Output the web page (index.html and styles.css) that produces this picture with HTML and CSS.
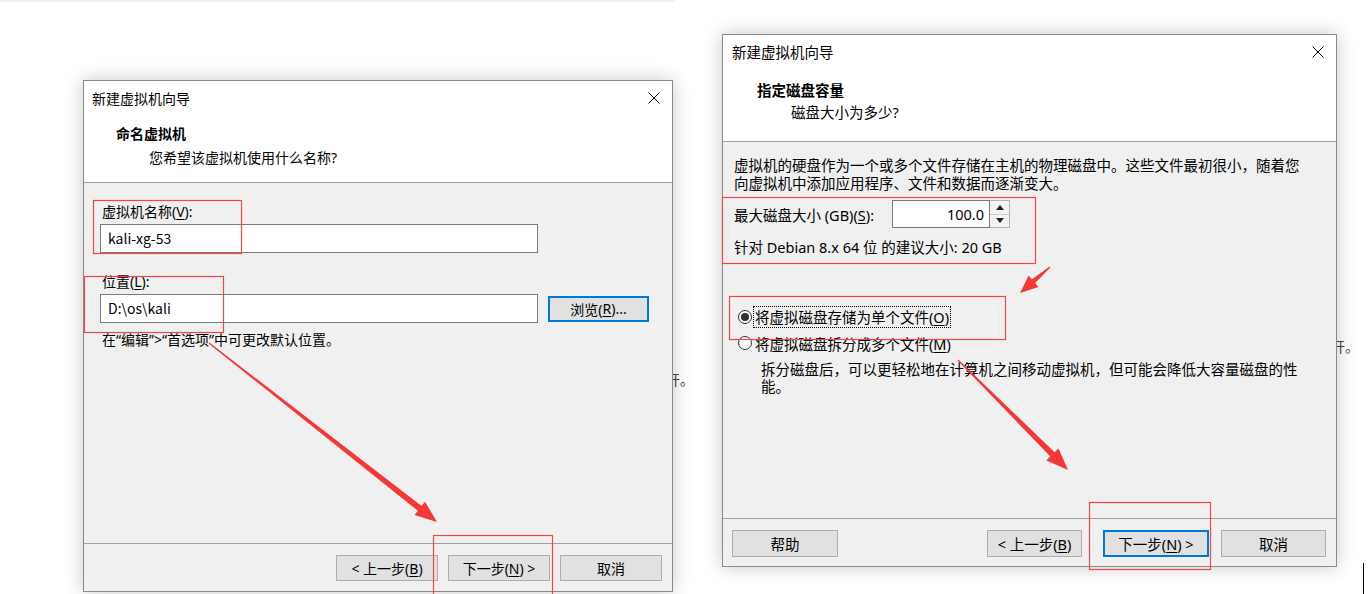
FILE: index.html
```html
<!DOCTYPE html>
<html>
<head>
	<meta charset="utf-8">
	<title>新建虚拟机向导</title>
	<link rel="stylesheet" href="styles.css">
</head>
<body>
	<div class="page">
		<div class="topline"></div>
		<span class="stray stray-a">开。</span>
		<span class="stray stray-b">开。</span>

		<!-- 第一步：命名虚拟机 -->
		<div class="wiz wiz-a">
			<div class="titlebar">
				<span>新建虚拟机向导</span>
				<svg class="close" viewBox="0 0 12 12"><path d="M0.5 0.5L11.5 11.5M11.5 0.5L0.5 11.5" stroke="#000" stroke-width="1"/></svg>
			</div>
			<div class="head">
				<div class="head-title">命名虚拟机</div>
				<div class="head-sub">您希望该虚拟机使用什么名称?</div>
			</div>
			<div class="body">
				<div class="label">虚拟机名称(<u>V</u>):</div>
				<div class="textbox">kali-xg-53</div>
				<div class="label label-loc">位置(<u>L</u>):</div>
				<div class="row">
					<div class="textbox">D:\os\kali</div>
					<div class="btn btn-focus browse">浏览(<u>R</u>)...</div>
				</div>
				<div class="hint">在“编辑”>“首选项”中可更改默认位置。</div>
			</div>
			<div class="foot">
				<div class="btn">&lt; 上一步(<u>B</u>)</div>
				<div class="btn">下一步(<u>N</u>) &gt;</div>
				<div class="btn">取消</div>
			</div>
		</div>

		<!-- 指定磁盘容量 -->
		<div class="wiz wiz-b">
			<div class="titlebar">
				<span>新建虚拟机向导</span>
				<svg class="close" viewBox="0 0 12 12"><path d="M0.5 0.5L11.5 11.5M11.5 0.5L0.5 11.5" stroke="#000" stroke-width="1"/></svg>
			</div>
			<div class="head">
				<div class="head-title">指定磁盘容量</div>
				<div class="head-sub">磁盘大小为多少?</div>
			</div>
			<div class="body">
				<div class="para">虚拟机的硬盘作为一个或多个文件存储在主机的物理磁盘中。这些文件最初很小，随着您向虚拟机中添加应用程序、文件和数据而逐渐变大。</div>
				<div class="size-row">
					<span class="size-label">最大磁盘大小 (GB)(<u>S</u>):</span>
					<div class="spin">
						<div class="spin-val">100.0</div>
						<div class="spin-btns">
							<div class="spin-up"></div>
							<div class="spin-down"></div>
						</div>
					</div>
				</div>
				<div class="rec">针对 Debian 8.x 64 位 的建议大小: 20 GB</div>
				<div class="radio-row radio-first">
					<span class="radio on"></span>
					<span class="focus">将虚拟磁盘存储为单个文件(<u>O</u>)</span>
				</div>
				<div class="radio-row">
					<span class="radio"></span>
					<span class="opt">将虚拟磁盘拆分成多个文件(<u>M</u>)</span>
				</div>
				<div class="desc">拆分磁盘后，可以更轻松地在计算机之间移动虚拟机，但可能会降低大容量磁盘的性能。</div>
			</div>
			<div class="foot">
				<div class="btn btn-help">帮助</div>
				<div class="btn btn-back">&lt; 上一步(<u>B</u>)</div>
				<div class="btn btn-focus btn-next">下一步(<u>N</u>) &gt;</div>
				<div class="btn btn-cancel">取消</div>
			</div>
		</div>

		<!-- 红框和箭头 -->
		<svg class="marks" width="1368" height="594" viewBox="0 0 1368 594">
			<g fill="none" stroke="#f04848" stroke-width="1.2">
				<rect x="93.5" y="200.5" width="148" height="53"/>
				<rect x="84.5" y="276.5" width="139" height="56"/>
				<rect x="433.5" y="535.5" width="119" height="70"/>
				<rect x="722.5" y="197.5" width="313" height="66"/>
				<rect x="729.5" y="296.5" width="276" height="43"/>
				<rect x="1089.5" y="502.5" width="121" height="67"/>
			</g>
			<g fill="#f43838">
				<polygon points="208.6,343.5 417.9,510.8 414.5,515.1 437,522 425,501.7 421.6,506 209.4,342.5"/>
				<polygon points="1049.7,266.6 1032,279.3 1028.7,275.5 1020,293 1038.5,286.9 1035.2,283.1 1050.3,267.4"/>
				<polygon points="957.6,360.4 1050.3,456.6 1046.4,460.5 1068,470 1058.5,448.4 1054.6,452.3 958.4,359.6"/>
			</g>
		</svg>
		<div class="cursor"></div>
	</div>
</body>
</html>
```

FILE: styles.css
```css
*{margin: 0;padding: 0;box-sizing: border-box;}
body {
	background: #fff;
	font-family: "Noto Sans", "Noto Sans CJK SC", sans-serif;
	color: #000;
}
u {
	text-decoration: underline;
	text-underline-offset: 2px;
}
.page {
	position: relative;
	width: 1368px;
	height: 594px;
	overflow: hidden;
}
.topline {
	position: absolute;
	left: 0;
	top: 0;
	width: 675px;
	height: 2px;
	background: #efefef;
}
.stray {
	position: absolute;
	font-size: 14px;
	line-height: 20px;
	color: #444;
}
.stray-a {
	left: 666px;
	top: 370px;
}
.stray-b {
	left: 1331px;
	top: 337px;
}
.cursor {
	position: absolute;
	left: 1363px;
	top: 563px;
	width: 1px;
	height: 31px;
	background: #000;
}

/* 对话框 */
.wiz {
	position: absolute;
	display: flex;
	flex-direction: column;
	background: #f0f0f0;
	border: 1px solid #8a8a8a;
	box-shadow: 0 0 18px rgba(0,0,0,0.22);
}
.wiz-a {
	left: 83px;
	top: 80px;
	width: 590px;
	height: 512px;
	font-size: 14px;
}
.wiz-b {
	left: 722px;
	top: 34px;
	width: 615px;
	height: 533px;
	font-size: 14.5px;
}
.titlebar {
	display: flex;
	align-items: center;
	justify-content: space-between;
	background: #fff;
	padding: 0 12px 0 8px;
	height: 34px;
}
.wiz-b .titlebar {
	height: 36px;
	padding: 0 12px 3px 9px;
}
.close {
	width: 12px;
	height: 12px;
}
.head {
	background: #fff;
	border-bottom: 1px solid #a0a0a0;
	height: 68px;
	padding: 9px 0 0 32px;
}
.head-title {
	font-weight: bold;
	line-height: 20px;
}
.head-sub {
	line-height: 20px;
	margin-top: 4px;
	padding-left: 33px;
}
.wiz-b .head {
	height: 71px;
	padding: 9px 0 0 34px;
}
.wiz-b .head-title {
	line-height: 21px;
}
.wiz-b .head-sub {
	line-height: 21px;
	margin-top: 1px;
	padding-left: 34px;
}
.body {
	flex: 1;
}
.foot {
	display: flex;
	height: 48px;
	border-top: 1px solid #a0a0a0;
}

/* 控件 */
.btn {
	display: flex;
	align-items: center;
	justify-content: center;
	background: #e1e1e1;
	border: 1px solid #adadad;
	height: 26px;
	width: 102px;
}
.btn-focus {
	border: 2px solid #0078d7;
}
.textbox {
	width: 438px;
	height: 29px;
	border: 1px solid #7a7a7a;
	background: #fff;
	line-height: 27px;
	padding: 0 7px;
	font-family: "Noto Sans CJK SC", sans-serif;
}

/* 左边：命名虚拟机 */
.wiz-a .body {
	padding: 19px 0 0 16px;
}
.label {
	line-height: 20px;
	padding-left: 2px;
	margin-bottom: 2px;
}
.label-loc {
	margin-top: 19px;
}
.row {
	display: flex;
	align-items: center;
}
.browse {
	margin-left: 10px;
	width: 101px;
}
.hint {
	margin-top: 7px;
	line-height: 20px;
	padding-left: 2px;
}
.wiz-a .foot {
	justify-content: flex-end;
	gap: 10px;
	padding: 11px 10px 0 0;
}

/* 右边：磁盘容量 */
.wiz-b .body {
	padding: 14px 0 0 11px;
}
.para {
	width: 570px;
	line-height: 18px;
}
.size-row {
	display: flex;
	align-items: center;
	height: 28px;
	margin-top: 8px;
}
.size-label {
	width: 158px;
}
.spin {
	display: flex;
	height: 28px;
}
.spin-val {
	width: 98px;
	border: 1px solid #7a7a7a;
	background: #fff;
	text-align: right;
	padding-right: 5px;
	line-height: 26px;
}
.spin-btns {
	width: 20px;
	display: flex;
	flex-direction: column;
	border: 1px solid #b4b4b4;
	border-left: 0;
	background: #f4f4f4;
}
.spin-up, .spin-down {
	flex: 1;
	display: flex;
	align-items: center;
	justify-content: center;
}
.spin-up {
	border-bottom: 1px solid #c8c8c8;
}
.spin-up:before {
	content: "";
	border-left: 4px solid transparent;
	border-right: 4px solid transparent;
	border-bottom: 5px solid #222;
}
.spin-down:before {
	content: "";
	border-left: 4px solid transparent;
	border-right: 4px solid transparent;
	border-top: 5px solid #222;
}
.rec {
	margin-top: 9px;
	line-height: 20px;
}
.radio-row {
	display: flex;
	align-items: center;
	height: 22px;
	padding-left: 4px;
}
.radio-row + .radio-row {
	margin-top: 4px;
}
.radio-first {
	margin-top: 49px;
}
.radio {
	width: 14px;
	height: 14px;
	border: 1px solid #333;
	border-radius: 50%;
	background: #fff;
	margin-right: 2px;
	display: flex;
	align-items: center;
	justify-content: center;
}
.radio.on:after {
	content: "";
	width: 8px;
	height: 8px;
	border-radius: 50%;
	background: #333;
}
.focus {
	outline: 1px dotted #000;
	padding: 0 1px;
	line-height: 20px;
}
.opt {
	padding: 0 1px;
}
.desc {
	margin: 7px 0 0 27px;
	width: 545px;
	line-height: 17px;
}
.wiz-b .foot {
	padding: 11px 10px 0 9px;
}
.wiz-b .btn {
	height: 27px;
}
.btn-help {
	width: 106px;
	margin-right: auto;
}
.btn-back {
	width: 95px;
	margin-right: 21px;
}
.btn-next {
	width: 106px;
	margin-right: 12px;
}
.btn-cancel {
	width: 105px;
}
.marks {
	position: absolute;
	left: 0;
	top: 0;
	pointer-events: none;
}
```
